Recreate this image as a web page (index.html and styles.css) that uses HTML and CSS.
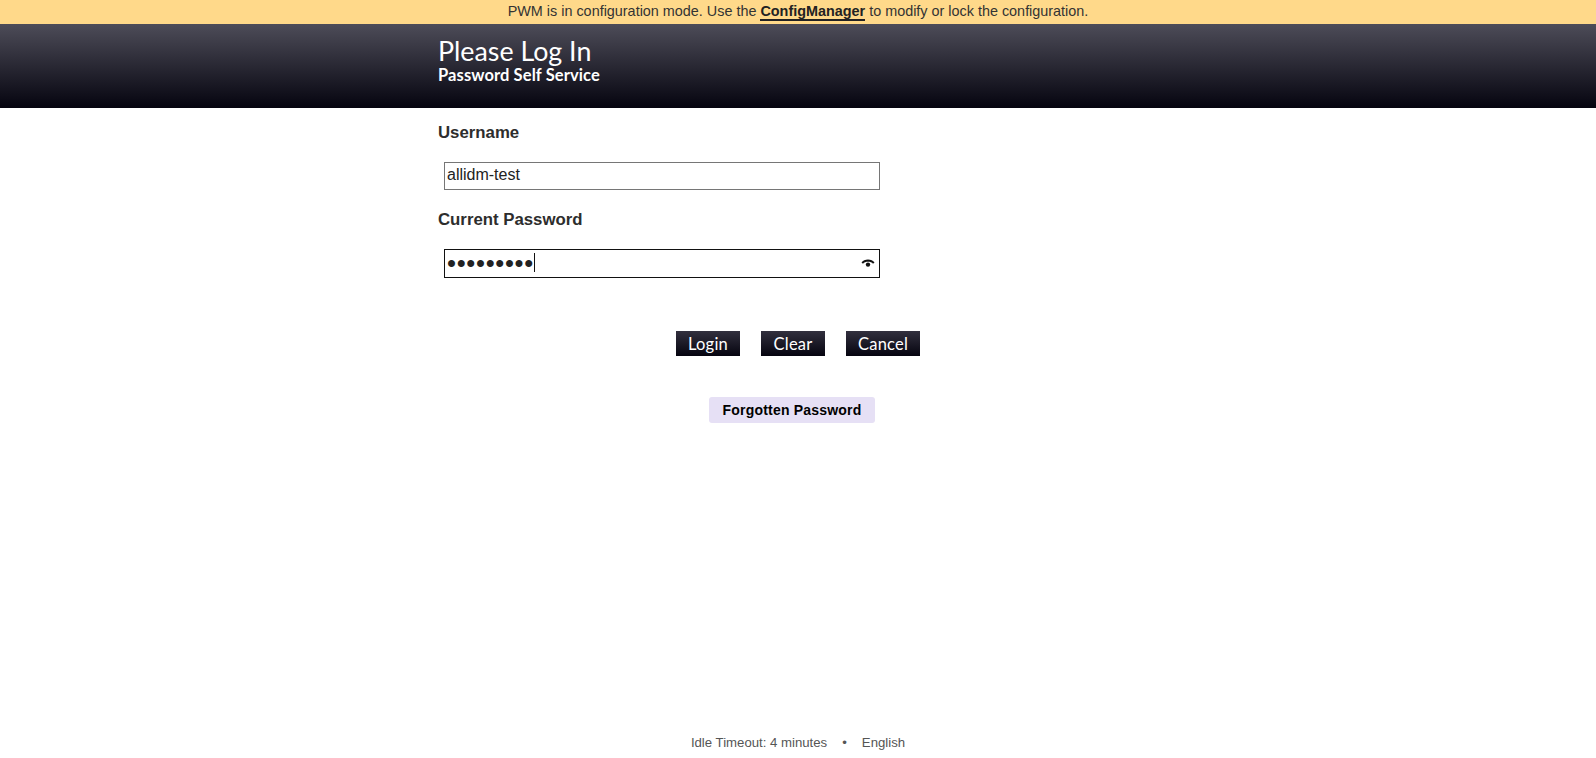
FILE: index.html
```html
<!DOCTYPE html>
<html lang="en">
<head>
  <meta charset="UTF-8" />
  <title>Please Log In</title>
  <link rel="stylesheet" href="styles.css">
</head>
<body>
  <div class="config-banner">
    PWM is in configuration mode. Use the <a href="#">ConfigManager</a> to modify or lock the configuration.
  </div>

  <div class="header">
    <div class="header-inner">
      <div class="page-title">Please Log In</div>
      <div class="site-title">Password Self Service</div>
    </div>
  </div>

  <div class="content">
    <form class="login-form">
      <label class="field-label" for="username">Username</label>
      <input class="field-input" id="username" type="text" value="allidm-test" />

      <label class="field-label password-label" for="password">Current Password</label>
      <div class="password-wrap">
        <input class="field-input focused" id="password" type="password" value="allidm-te" />
        <span class="caret"></span>
        <svg class="eye-icon" width="14" height="10" viewBox="0 0 14 10">
          <path d="M0.5 4.6 C3 0.6 11 0.6 13.5 4.6 L12 5.8 C10 3.2 4 3.2 2 5.8 Z" fill="#111" />
          <circle cx="7" cy="6.6" r="2.2" fill="#111" />
        </svg>
      </div>

      <div class="button-row">
        <button class="btn" type="button">Login</button>
        <button class="btn" type="button">Clear</button>
        <button class="btn" type="button">Cancel</button>
      </div>

      <div class="link-row">
        <button class="btn-link" type="button">Forgotten Password</button>
      </div>
    </form>
  </div>

  <div class="footer">
    <span>Idle Timeout: 4 minutes</span>
    <span>•</span>
    <span>English</span>
  </div>
</body>
</html>
```

FILE: styles.css
```css
html, body {
  height: 100%;
}

body {
  margin: 0;
  background-color: white;
  color: #2d2d2d;
  font-family: "Liberation Sans", Arial, sans-serif;
  display: flex;
  flex-direction: column;
  overflow: hidden;
}

.config-banner {
  height: 24px;
  line-height: 23px;
  background: #ffd98a;
  text-align: center;
  font-size: 14.4px;
  color: #333;
}

.config-banner a {
  color: #222;
  font-weight: bold;
  text-decoration: none;
  border-bottom: 2px solid #222;
}

.header {
  height: 84px;
  background: linear-gradient(to bottom, #4d4c58, #05040f);
}

.header-inner {
  width: 720px;
  margin: 0 auto;
  padding-top: 12px;
  color: white;
  font-family: Lato, sans-serif;
}

.page-title {
  font-size: 26.8px;
  line-height: 30px;
}

.site-title {
  font-size: 16.5px;
  line-height: 18px;
  font-weight: 700;
  letter-spacing: 0.1px;
}

.content {
  flex: 1;
}

.login-form {
  width: 720px;
  margin: 0 auto;
  padding-top: 16px;
}

.field-label {
  display: block;
  height: 18px;
  line-height: 18px;
  font-size: 16.8px;
  font-weight: bold;
  color: #2d2d2d;
}

.password-label {
  margin-top: 21px;
}

.field-input {
  display: block;
  box-sizing: border-box;
  width: 436px;
  height: 28px;
  margin: 20px 0 0 6px;
  padding: 0 2px 2px;
  border: 1px solid #767676;
  border-radius: 0;
  outline: none;
  font-family: "Liberation Sans", Arial, sans-serif;
  font-size: 16px;
  color: #222;
}

.field-input.focused {
  height: 29px;
  padding-bottom: 0;
  border-color: #111;
  font-size: 25.6px;
  letter-spacing: 0.7px;
}

.password-wrap {
  position: relative;
}

.caret {
  position: absolute;
  left: 96px;
  top: 4px;
  width: 1px;
  height: 19px;
  background: #111;
}

.eye-icon {
  position: absolute;
  left: 423px;
  top: 9px;
}

.button-row {
  display: flex;
  justify-content: center;
  gap: 21px;
  margin-top: 53px;
}

.btn {
  height: 25px;
  width: 64px;
  padding: 0;
  border: none;
  background: linear-gradient(to bottom, #32303e, #05040f);
  color: white;
  font-family: Lato, sans-serif;
  font-size: 16.5px;
  letter-spacing: 0.2px;
  cursor: pointer;
}

.btn:last-child {
  width: 74px;
}

.link-row {
  display: flex;
  justify-content: center;
  margin-top: 41px;
  padding-right: 12px;
}

.btn-link {
  width: 166px;
  height: 26px;
  padding: 0;
  border: none;
  border-radius: 3px;
  background: #e6e0f5;
  color: #000;
  font-family: "Liberation Sans", Arial, sans-serif;
  font-size: 14px;
  font-weight: bold;
  letter-spacing: 0.2px;
  cursor: pointer;
}

.footer {
  height: 29px;
  display: flex;
  justify-content: center;
  gap: 15px;
  font-size: 13.2px;
  line-height: 27px;
  color: #555;
}
```
